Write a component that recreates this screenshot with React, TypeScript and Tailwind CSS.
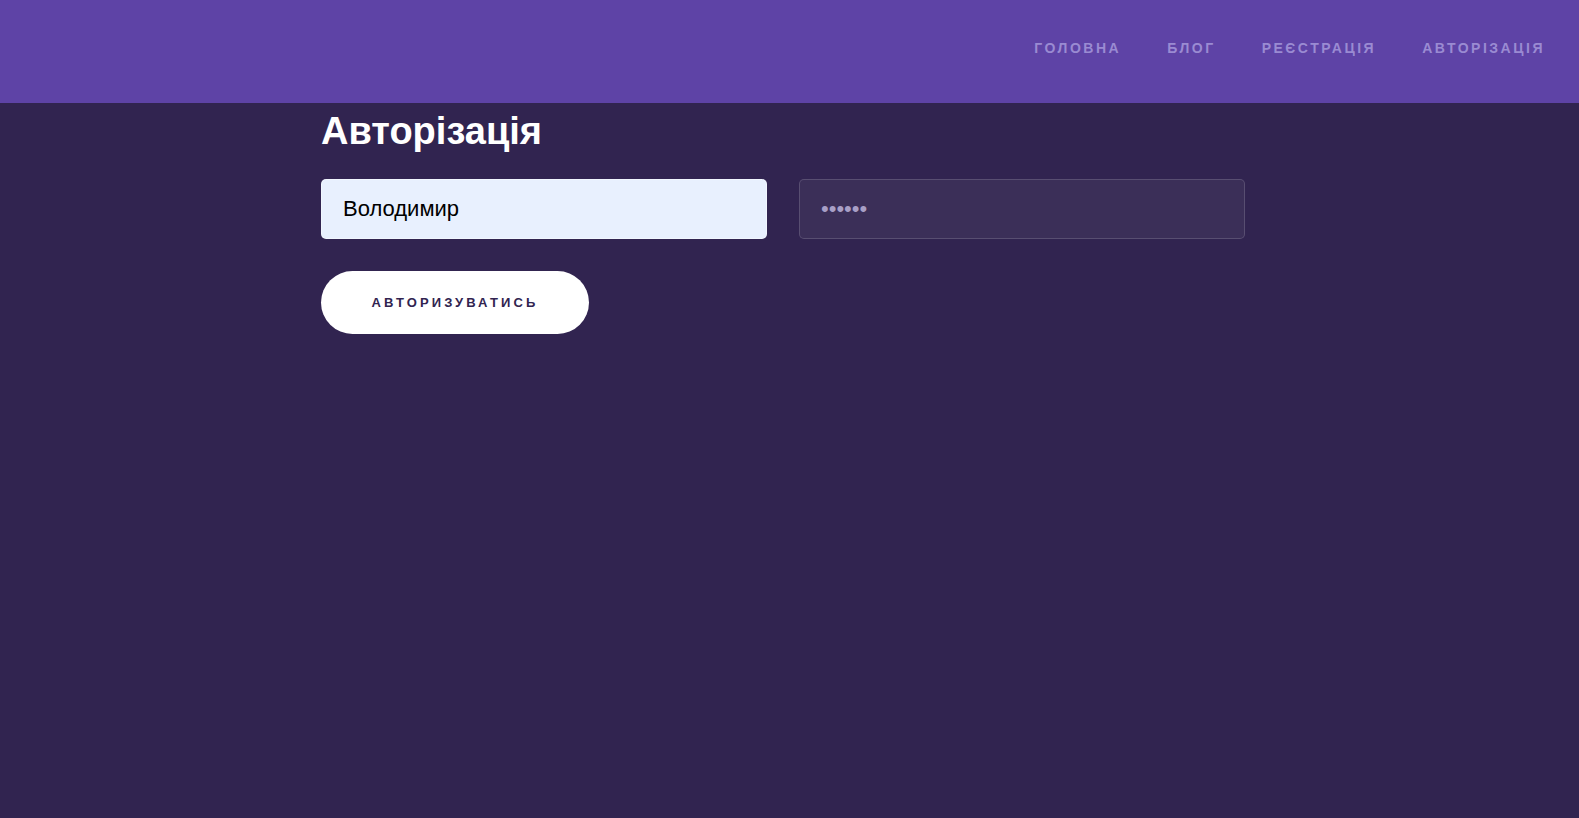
const navItems = ["Головна", "Блог", "Реєстрація", "Авторізація"];

export default function App() {
  return (
    <div className="min-h-screen bg-[#312450] font-['Liberation_Sans',Arial,sans-serif]">
      <header className="h-[103px] bg-[#5e43a6] flex items-center justify-end pr-[34px] pb-[6px]">
        <nav className="flex items-center gap-[46px]">
          {navItems.map((item) => (
            <a
              key={item}
              href="#"
              className="text-[14px] font-bold uppercase tracking-[0.18em] text-[#9a8bd2]"
            >
              {item}
            </a>
          ))}
        </nav>
      </header>

      <main className="w-[937px] mx-auto pt-[7px]">
        <h1 className="text-[38px] leading-[42px] font-bold text-white">
          Авторізація
        </h1>

        <form className="mt-[27px]" onSubmit={(e) => e.preventDefault()}>
          <div className="flex gap-8">
            <input
              type="text"
              defaultValue="Володимир"
              readOnly
              className="w-[446px] h-[60px] rounded-[5px] border border-white/40 bg-[#e8f0fe] px-[21px] text-[22px] text-black outline-none"
            />
            <input
              type="password"
              defaultValue="123456"
              readOnly
              className="w-[446px] h-[60px] rounded-[5px] border border-white/15 bg-white/5 px-[21px] text-[22px] text-[#a89fc6] outline-none"
            />
          </div>

          <button
            type="submit"
            className="mt-[32px] h-[63px] w-[268px] rounded-full bg-white text-[13px] font-bold uppercase tracking-[0.24em] text-[#312450]"
          >
            Авторизуватись
          </button>
        </form>
      </main>
    </div>
  );
}
